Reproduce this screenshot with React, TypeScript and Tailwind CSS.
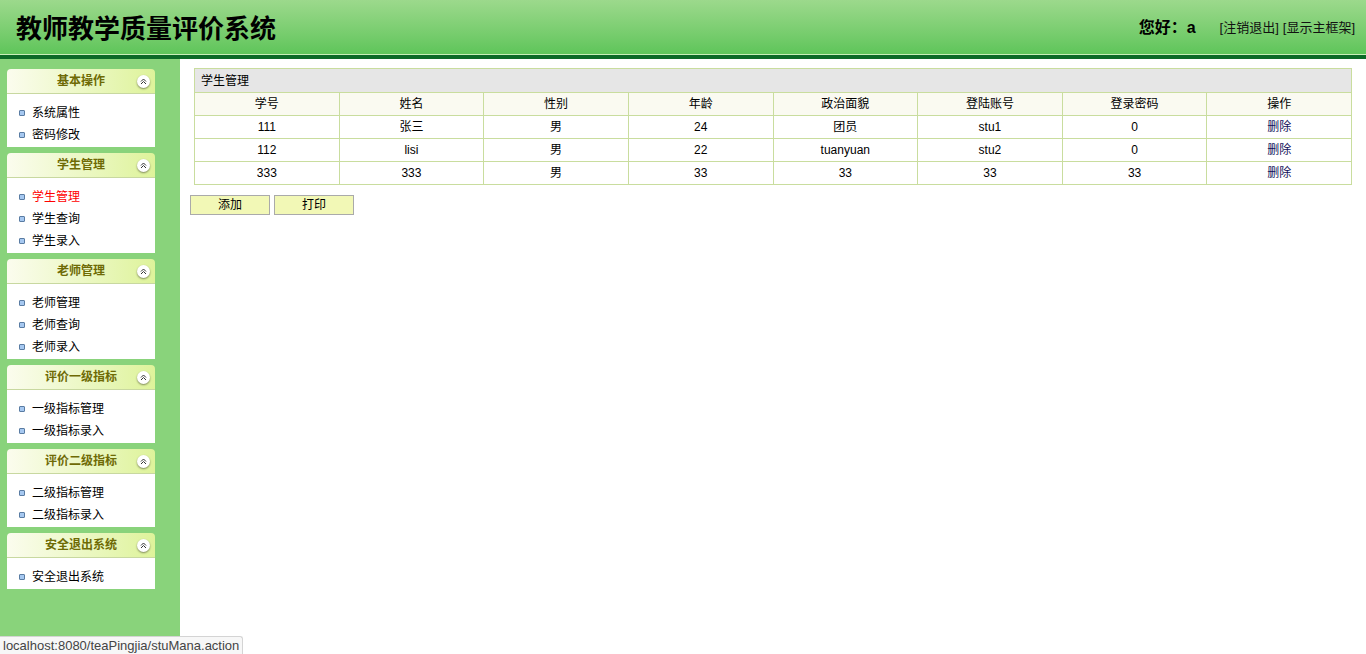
import React from "react";

const menus = [
  { title: "基本操作", items: ["系统属性", "密码修改"] },
  { title: "学生管理", items: ["学生管理", "学生查询", "学生录入"] },
  { title: "老师管理", items: ["老师管理", "老师查询", "老师录入"] },
  { title: "评价一级指标", items: ["一级指标管理", "一级指标录入"] },
  { title: "评价二级指标", items: ["二级指标管理", "二级指标录入"] },
  { title: "安全退出系统", items: ["安全退出系统"] },
];

const columns = ["学号", "姓名", "性别", "年龄", "政治面貌", "登陆账号", "登录密码", "操作"];

const students = [
  ["111", "张三", "男", "24", "团员", "stu1", "0"],
  ["112", "lisi", "男", "22", "tuanyuan", "stu2", "0"],
  ["333", "333", "男", "33", "33", "33", "33"],
];

const font = { fontFamily: '"Liberation Sans", "Noto Sans CJK SC", sans-serif' };

const CollapseIcon = () => (
  <span className="w-[13px] h-[13px] rounded-full bg-white shadow-[0_1px_2px_rgba(0,0,0,0.45)] flex items-center justify-center">
    <svg width="7" height="7" viewBox="0 0 7 7" fill="none" stroke="#333" strokeWidth="1">
      <path d="M1 3.5 L3.5 1 L6 3.5" />
      <path d="M1 6 L3.5 3.5 L6 6" />
    </svg>
  </span>
);

export default function App() {
  return (
    <div className="h-screen flex flex-col relative overflow-hidden text-[12px] text-black" style={font}>
      {/* Header */}
      <div className="h-[54px] shrink-0 bg-gradient-to-b from-[#9cd98c] to-[#5ec55a] flex items-center justify-between pl-4 pr-[11px]">
        <h1 className="text-[26px] font-bold leading-none pt-[4px]">教师教学质量评价系统</h1>
        <div className="flex items-center pt-[2px]">
          <span className="text-[16px] font-bold mr-[24px]">您好：a</span>
          <span className="text-[13px] text-[#111]">[注销退出]</span>
          <span className="text-[13px] text-[#111] ml-[4px]">[显示主框架]</span>
        </div>
      </div>
      <div className="h-px bg-[#c9efb9] shrink-0" />
      <div className="h-[4px] bg-[#0b6a27] shrink-0" />

      <div className="flex flex-1 min-h-0">
        {/* Sidebar */}
        <div className="w-[180px] shrink-0 bg-[#89d37b] pl-[7px] pt-[10px] flex flex-col gap-[6px]">
          {menus.map((m, i) => (
            <div key={m.title} className="w-[148px]">
              <div className="h-[25px] rounded-t-[4px] bg-gradient-to-r from-[#fbfcee] to-[#def39a] border-b border-[#c8d8a0] flex items-center relative">
                <span className="flex-1 text-center text-[12px] font-bold text-[#6e6a05]">{m.title}</span>
                <span className="absolute right-[5px] top-[6px]">
                  <CollapseIcon />
                </span>
              </div>
              <div className="bg-white pt-2 pb-px">
                {m.items.map((it) => (
                  <div key={it} className="h-[22px] flex items-center pl-[12px]">
                    <span className="w-[6px] h-[6px] rounded-[1px] border border-[#5a7ca3] bg-[#a6c8f0] mr-[7px]" />
                    <span className={i === 1 && it === "学生管理" ? "text-[#ff0000]" : "text-black"}>{it}</span>
                  </div>
                ))}
              </div>
            </div>
          ))}
        </div>

        {/* Main */}
        <div className="flex-1 bg-white pt-[9px] pl-[10px] pr-[14px]">
          <table className="w-[1158px] ml-[4px] border-collapse border border-[#c9dd9e] table-fixed">
            <thead>
              <tr>
                <th colSpan={8} className="h-[24px] bg-[#e6e6e6] border border-[#c9dd9e] text-left font-normal pl-[6px]">
                  学生管理
                </th>
              </tr>
              <tr>
                {columns.map((c) => (
                  <th key={c} className="h-[23px] bg-[#fafaf1] border border-[#c9dd9e] font-normal text-center">
                    {c}
                  </th>
                ))}
              </tr>
            </thead>
            <tbody>
              {students.map((s) => (
                <tr key={s[0]}>
                  {s.map((v, j) => (
                    <td key={j} className="h-[23px] border border-[#c9dd9e] text-center">
                      {v}
                    </td>
                  ))}
                  <td className="h-[23px] border border-[#c9dd9e] text-center text-[#10105a]">删除</td>
                </tr>
              ))}
            </tbody>
          </table>
          <div className="flex gap-[4px] mt-[10px]">
            <button className="w-[80px] h-[20px] bg-[#f2f8b6] border border-[#aaa] text-[12px]">添加</button>
            <button className="w-[80px] h-[20px] bg-[#f2f8b6] border border-[#aaa] text-[12px]">打印</button>
          </div>
        </div>
      </div>

      {/* Browser status bubble */}
      <div className="absolute left-0 bottom-0 h-[18px] px-[3px] bg-[#f7f7f7] border-t border-r border-[#d4d4d4] rounded-tr-[3px] text-[13px] text-[#444] leading-[17px]">
        localhost:8080/teaPingjia/stuMana.action
      </div>
    </div>
  );
}
